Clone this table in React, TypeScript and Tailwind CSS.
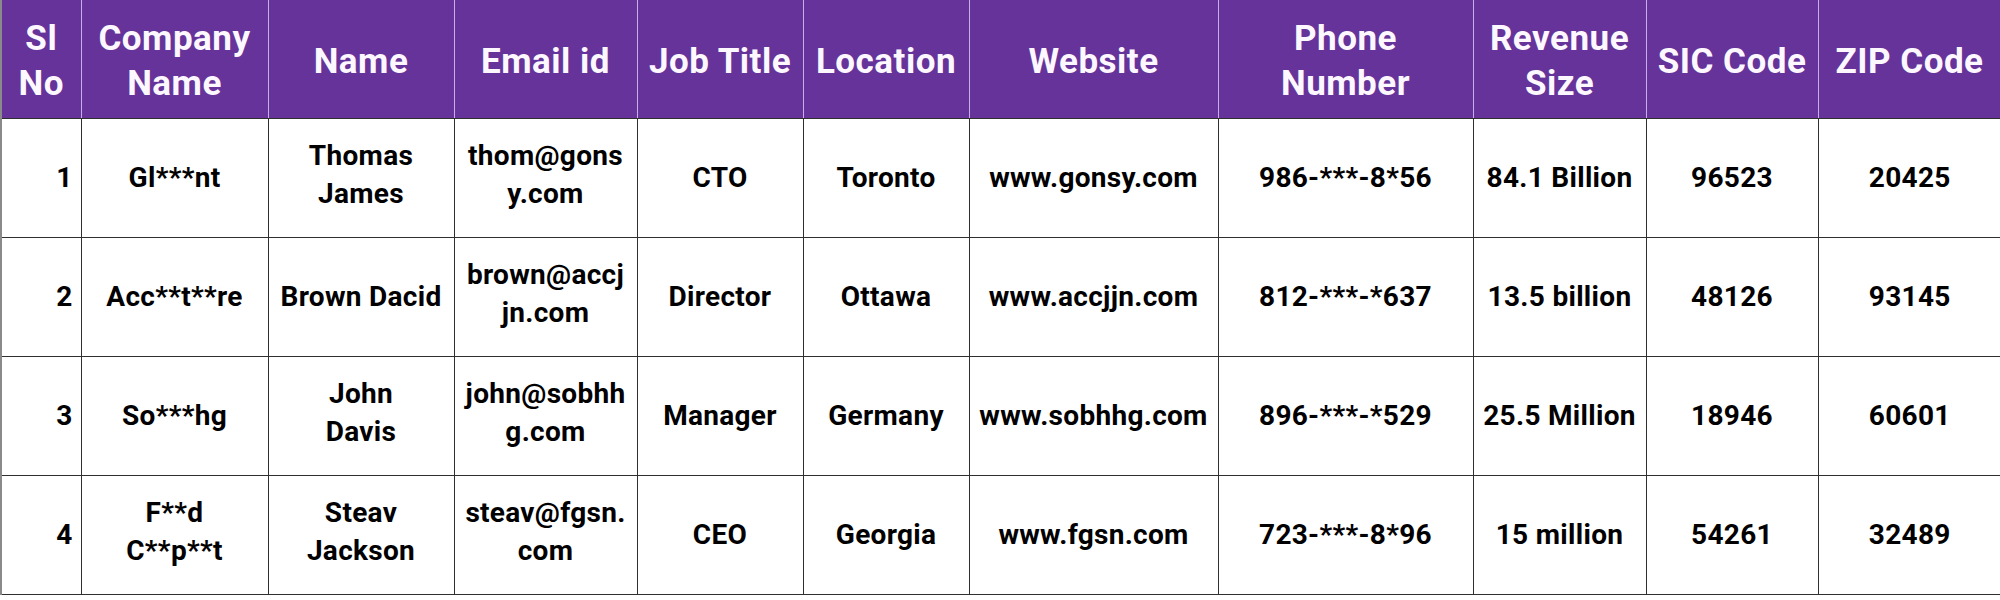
import React from "react";

interface Row {
  sl: number;
  company: string[];
  name: string[];
  email: string[];
  title: string;
  location: string;
  website: string;
  phone: string;
  revenue: string;
  sic: string;
  zip: string;
}

const columns: { label: string[]; width: string }[] = [
  { label: ["Sl", "No"], width: "w-[80px]" },
  { label: ["Company", "Name"], width: "w-[187px]" },
  { label: ["Name"], width: "w-[186px]" },
  { label: ["Email id"], width: "w-[183px]" },
  { label: ["Job Title"], width: "w-[166px]" },
  { label: ["Location"], width: "w-[166px]" },
  { label: ["Website"], width: "w-[249px]" },
  { label: ["Phone", "Number"], width: "w-[255px]" },
  { label: ["Revenue", "Size"], width: "w-[173px]" },
  { label: ["SIC Code"], width: "w-[172px]" },
  { label: ["ZIP Code"], width: "w-[183px]" },
];

const rows: Row[] = [
  {
    sl: 1,
    company: ["Gl***nt"],
    name: ["Thomas", "James"],
    email: ["thom@gons", "y.com"],
    title: "CTO",
    location: "Toronto",
    website: "www.gonsy.com",
    phone: "986-***-8*56",
    revenue: "84.1 Billion",
    sic: "96523",
    zip: "20425",
  },
  {
    sl: 2,
    company: ["Acc**t**re"],
    name: ["Brown Dacid"],
    email: ["brown@accj", "jn.com"],
    title: "Director",
    location: "Ottawa",
    website: "www.accjjn.com",
    phone: "812-***-*637",
    revenue: "13.5 billion",
    sic: "48126",
    zip: "93145",
  },
  {
    sl: 3,
    company: ["So***hg"],
    name: ["John", "Davis"],
    email: ["john@sobhh", "g.com"],
    title: "Manager",
    location: "Germany",
    website: "www.sobhhg.com",
    phone: "896-***-*529",
    revenue: "25.5 Million",
    sic: "18946",
    zip: "60601",
  },
  {
    sl: 4,
    company: ["F**d", "C**p**t"],
    name: ["Steav", "Jackson"],
    email: ["steav@fgsn.", "com"],
    title: "CEO",
    location: "Georgia",
    website: "www.fgsn.com",
    phone: "723-***-8*96",
    revenue: "15 million",
    sic: "54261",
    zip: "32489",
  },
];

// multi-line body cells sit a few px higher than single-line ones in the original
function Lines({ lines, lift = false }: { lines: string[]; lift?: boolean }) {
  return (
    <div className={lift && lines.length > 1 ? "pb-[6px]" : ""}>
      {lines.map((l, i) => (
        <div key={i} className="whitespace-nowrap">
          {l}
        </div>
      ))}
    </div>
  );
}

export default function App() {
  const cell =
    "border border-[#2f2f2f] text-center align-middle text-[28px] leading-[38px] text-black tracking-[0.3px]";

  return (
    <div className="w-[2000px] h-[600px] bg-white font-['Roboto',_sans-serif] font-bold overflow-hidden">
      <table className="table-fixed border-collapse w-[2000px] border-l-2 border-l-[#8a8a8a]">
        <thead>
          <tr className="h-[118px] bg-[#66339a]">
            {columns.map((c, i) => (
              <th
                key={i}
                className={`${c.width} pt-[5px] border-x border-x-[#c8aee8] border-b border-b-[#2f2f2f] text-center align-middle text-[35px] leading-[45px] font-bold text-[#fdf8ff] tracking-[0.5px]`}
              >
                <Lines lines={c.label} />
              </th>
            ))}
          </tr>
        </thead>
        <tbody>
          {rows.map((r) => (
            <tr key={r.sl} className="h-[119px]">
              <td className={`${cell} text-right pr-[8px]`}>{r.sl}</td>
              <td className={cell}>
                <Lines lines={r.company} lift />
              </td>
              <td className={cell}>
                <Lines lines={r.name} lift />
              </td>
              <td className={cell}>
                <Lines lines={r.email} lift />
              </td>
              <td className={cell}>{r.title}</td>
              <td className={cell}>{r.location}</td>
              <td className={cell}>{r.website}</td>
              <td className={cell}>{r.phone}</td>
              <td className={cell}>{r.revenue}</td>
              <td className={cell}>{r.sic}</td>
              <td className={`${cell} border-r-0`}>{r.zip}</td>
            </tr>
          ))}
        </tbody>
      </table>
    </div>
  );
}
